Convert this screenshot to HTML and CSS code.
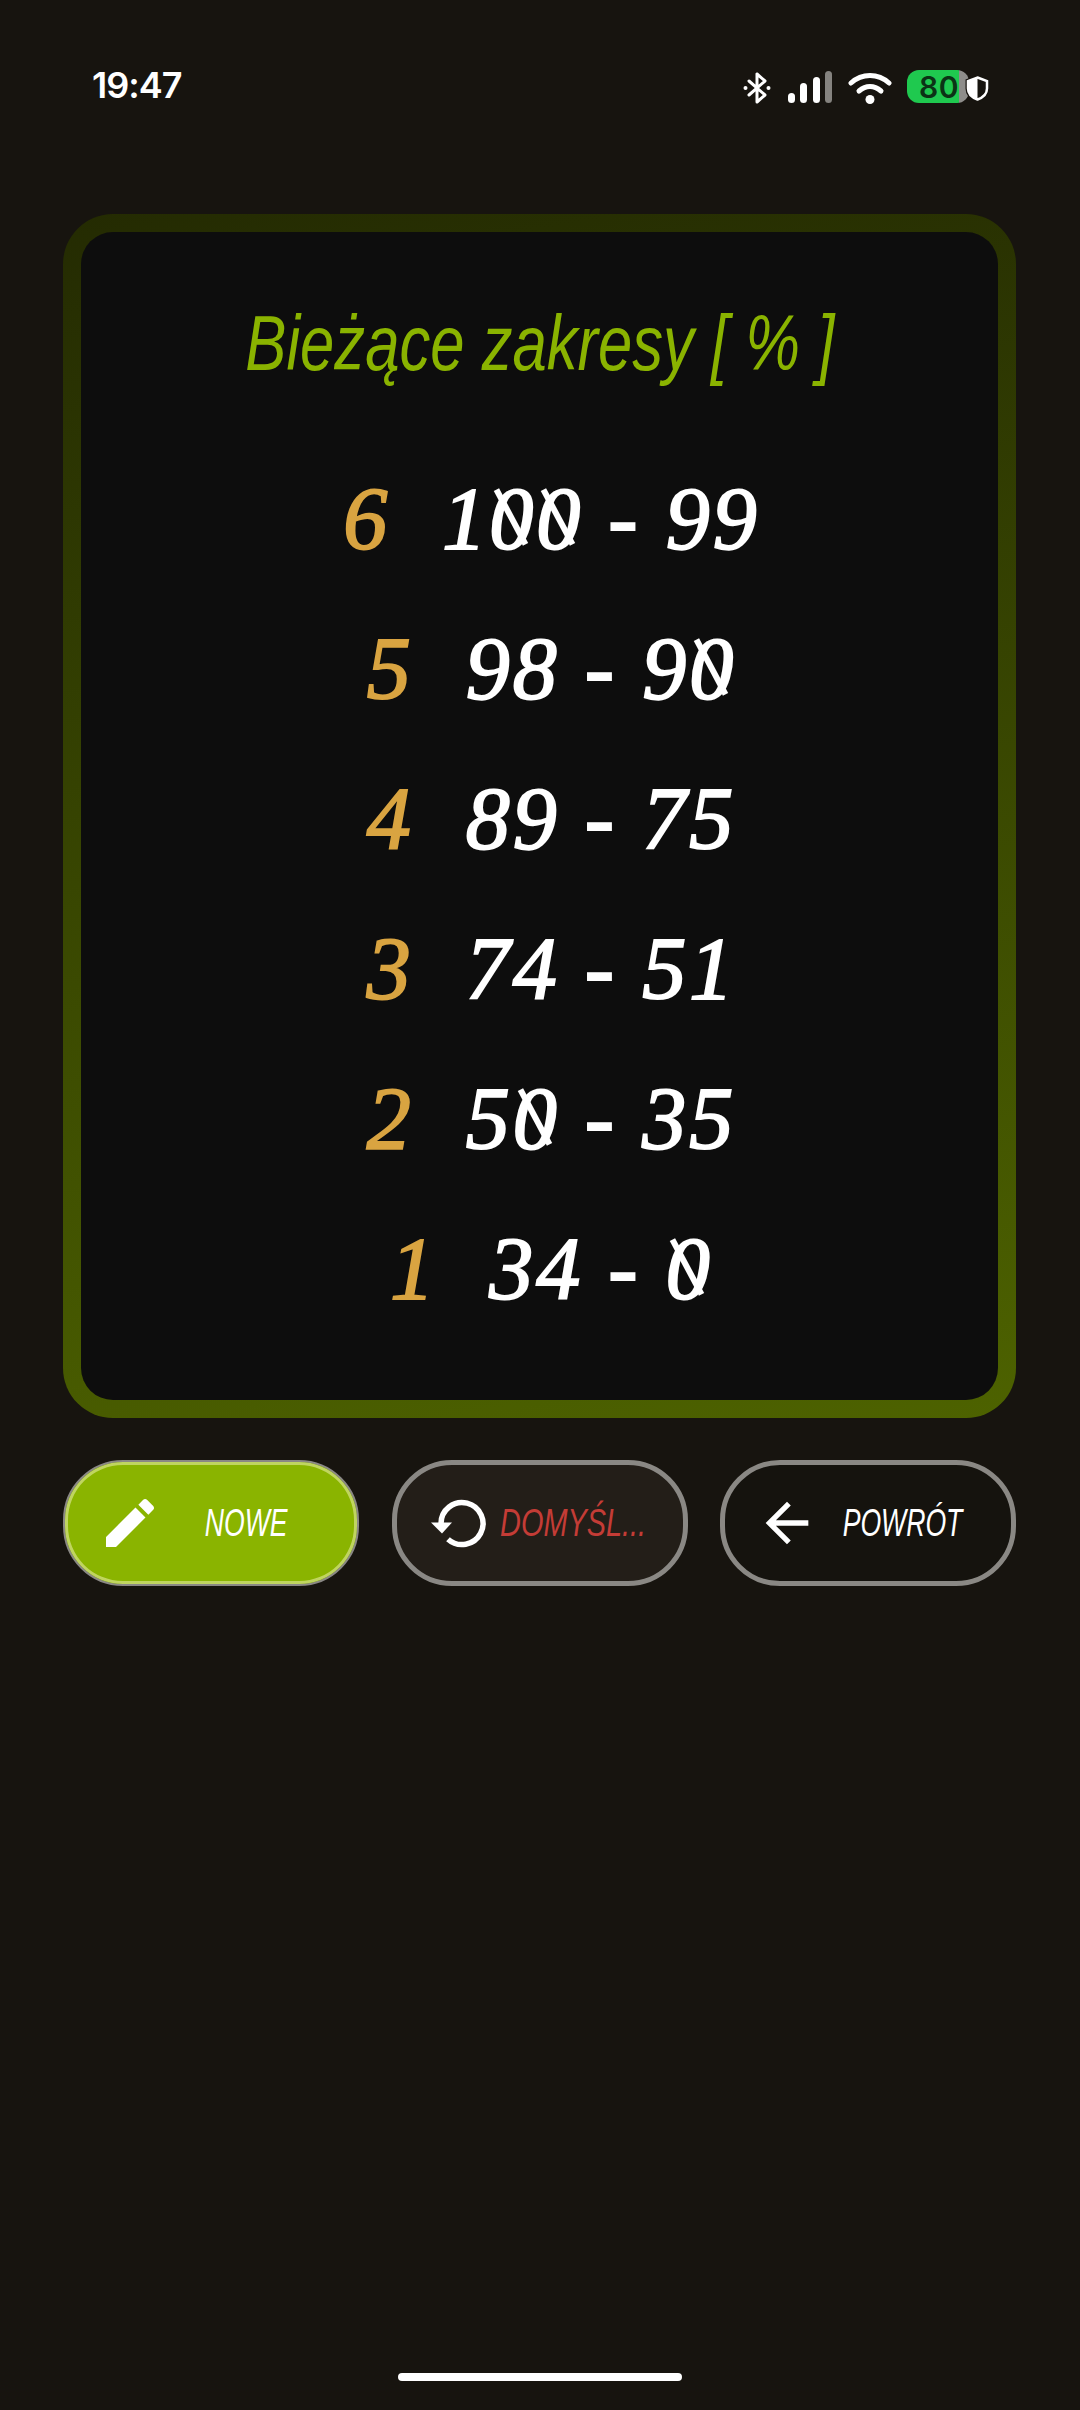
FILE: index.html
```html
<!DOCTYPE html>
<html lang="pl">
<head>
    <meta charset="UTF-8">
    <meta name="viewport" content="width=device-width, initial-scale=1.0">
    <title>Bieżące zakresy</title>
    <link rel="stylesheet" href="styles.css">
</head>
<body>

    <!-- Status bar -->
    <header class="status-bar">
        <span class="clock">19:47</span>
        <div class="status-icons">
            <svg class="icon-bt" viewBox="0 0 28 32"><path d="M14 2v28l8-7-16-14M14 2l8 7-16 14" fill="none" stroke="#fff" stroke-width="3" stroke-linejoin="round" stroke-linecap="round"/><circle cx="2.500" cy="16" r="2" fill="#fff"/><circle cx="25.500" cy="16" r="2" fill="#fff"/></svg>
            <div class="signal">
                <span class="bar bar-1"></span>
                <span class="bar bar-2"></span>
                <span class="bar bar-3"></span>
                <span class="bar bar-4"></span>
            </div>
            <svg class="icon-wifi" viewBox="0 0 44 32"><path d="M3 11C14 1 30 1 41 11" fill="none" stroke="#fff" stroke-width="5" stroke-linecap="round"/><path d="M11 19c7-6 15-6 22 0" fill="none" stroke="#fff" stroke-width="5" stroke-linecap="round"/><circle cx="22" cy="27.500" r="4.500" fill="#fff"/></svg>
            <div class="battery">80</div>
            <svg class="icon-shield" viewBox="0 0 25 27"><path d="M12.500 1.500 23 5.500v8c0 6-4.500 10-10.500 12C6.500 23.500 2 19.500 2 13.500v-8z" fill="#17140f" stroke="#17140f" stroke-width="3"/><path d="M12.500 2.500 22 6v7.500c0 5.500-4 9-9.500 11C7 22.500 3 19 3 13.500V6z" fill="none" stroke="#fff" stroke-width="2.500"/><path d="M12.500 3 3 6v7.500c0 5.500 4 9 9.500 11z" fill="#fff"/></svg>
        </div>
    </header>

    <!-- Ranges card -->
    <main class="card">
        <h1 class="card-title"><span class="narrow-title">Bieżące zakresy [ % ]</span></h1>
        <div class="row"><span class="grade">6</span><span class="range">1<span class="zero">0</span><span class="zero">0</span> - 99</span></div>
        <div class="row"><span class="grade">5</span><span class="range">98 - 9<span class="zero">0</span></span></div>
        <div class="row"><span class="grade">4</span><span class="range">89 - 75</span></div>
        <div class="row"><span class="grade">3</span><span class="range">74 - 51</span></div>
        <div class="row"><span class="grade">2</span><span class="range">5<span class="zero">0</span> - 35</span></div>
        <div class="row"><span class="grade">1</span><span class="range">34 - <span class="zero">0</span></span></div>
    </main>

    <!-- Buttons -->
    <nav class="actions">
        <button class="btn btn-new">
            <svg class="btn-icon" viewBox="0 0 24 24"><path d="M3 17.250V21h3.750L17.810 9.940l-3.750-3.750zM20.710 7.040c.39-.39.39-1.020 0-1.410l-2.340-2.340c-.39-.39-1.020-.39-1.410 0l-1.830 1.830 3.750 3.750z"/></svg>
            <span class="btn-label"><span class="narrow">NOWE</span></span>
        </button>
        <button class="btn btn-default">
            <svg class="btn-icon" viewBox="0 0 64 64"><path d="M14 32.500A21 21 0 1 1 21 48.200" fill="none" stroke="#fff" stroke-width="5.500"/><path d="M4 31.500h21L15 42.500z"/></svg>
            <span class="btn-label label-red"><span class="narrow">DOMYŚL...</span></span>
        </button>
        <button class="btn btn-back">
            <svg class="btn-icon" viewBox="0 0 24 24"><path d="M20 11H7.830l5.590-5.590L12 4l-8 8 8 8 1.410-1.410L7.830 13H20z"/></svg>
            <span class="btn-label"><span class="narrow">POWRÓT</span></span>
        </button>
    </nav>

    <div class="home-bar"></div>

</body>
</html>
```

FILE: styles.css
```css
body {
    margin: 0;
    height: 2410px;
    padding: 0 64px 29px 63px;
    box-sizing: border-box;
    display: flex;
    flex-direction: column;
    background-color: #17140f;
    font-family: "Liberation Serif", serif;
    overflow: hidden;
}

/* status bar */
.status-bar {
    height: 214px;
    padding: 63px 26px 0 29px;
    box-sizing: border-box;
    display: flex;
    justify-content: space-between;
    align-items: flex-start;
}
.clock {
    font-family: Inter, sans-serif;
    font-size: 36px;
    font-weight: 600;
    letter-spacing: -1px;
    line-height: 44px;
    color: #fff;
}
.status-icons {
    display: flex;
    align-items: flex-start;
    margin-top: 7px;
}
.icon-bt {
    width: 28px;
    height: 32px;
    margin-top: 2px;
    margin-right: 17px;
}
.signal {
    display: flex;
    align-items: flex-end;
    gap: 5.5px;
    height: 32px;
    margin-top: 1px;
    margin-right: 16px;
}
.bar {
    width: 7px;
    border-radius: 4px;
    background-color: #fff;
}
.bar-1 { height: 10px; }
.bar-2 { height: 20px; }
.bar-3 { height: 26px; }
.bar-4 { height: 32px; background-color: #85837f; }
.icon-wifi {
    width: 44px;
    height: 32px;
    margin-top: 2px;
    margin-right: 15px;
}
.battery {
    width: 62px;
    height: 33px;
    padding-right: 10px;
    box-sizing: border-box;
    border-radius: 12px;
    background: linear-gradient(to right, #1fc94f 52px, #8e8d8a 52px);
    font-family: Inter, sans-serif;
    font-size: 30px;
    font-weight: 600;
    letter-spacing: 0.5px;
    line-height: 34px;
    text-align: right;
    color: #0b3315;
}
.icon-shield {
    width: 25px;
    height: 27px;
    margin-left: -4px;
    margin-top: 5px;
}

/* card */
.card {
    height: 1204px;
    padding: 66px 0 0;
    box-sizing: border-box;
    border: 18px solid transparent;
    border-radius: 50px;
    background: linear-gradient(#0d0d0d, #0d0d0d) padding-box,
                linear-gradient(170deg, #242b02, #4d6200) border-box;
}
.card-title {
    margin: 0 0 56px;
    font-family: "Liberation Sans", sans-serif;
    font-size: 78px;
    font-style: italic;
    font-weight: 400;
    line-height: 90px;
    text-align: center;
    color: #8ab300;
}
.narrow-title {
    display: inline-block;
    transform: scaleX(0.79);
}
.row {
    height: 150px;
    padding-left: 24px;
    display: flex;
    justify-content: center;
    align-items: center;
    gap: 55px;
    font-size: 88px;
    font-style: italic;
    line-height: 150px;
    -webkit-text-stroke: 2px currentColor;
}
.grade {
    color: #d9a441;
}
.range {
    color: #fff;
    letter-spacing: 3px;
    white-space: pre;
}
.zero {
    position: relative;
}
.zero::after {
    content: "";
    position: absolute;
    left: 40%;
    top: 17%;
    width: 6px;
    height: 64%;
    background-color: #fff;
    transform: rotate(-28deg);
}

/* buttons */
.actions {
    margin-top: 42px;
    display: flex;
    justify-content: space-between;
}
.btn {
    width: 296px;
    height: 126px;
    padding: 0 26px 0 30px;
    box-sizing: border-box;
    border: 5px solid #8a8884;
    border-radius: 60px;
    display: flex;
    align-items: center;
    color: #fff;
    background-color: #15130e;
    cursor: pointer;
}
.btn-new {
    border-width: 2px;
    padding-left: 33px;
    background-color: #8ab400;
    box-shadow: inset 0 0 0 3px #c0d560;
}
.btn-default {
    background-color: #231e18;
}
.btn-icon {
    width: 64px;
    height: 64px;
    flex-shrink: 0;
    fill: #fff;
}
.btn-label {
    flex: 1;
    min-width: 0;
    display: flex;
    justify-content: center;
    font-family: "Liberation Sans", sans-serif;
    font-size: 38px;
    font-style: italic;
}
.narrow {
    white-space: nowrap;
    transform: scaleX(0.7);
}
.label-red {
    color: #c43c36;
}
.label-red .narrow {
    transform: scaleX(0.76);
}

/* home indicator */
.home-bar {
    width: 284px;
    height: 8px;
    margin: auto auto 0;
    border-radius: 4px;
    background-color: #fff;
}
```
